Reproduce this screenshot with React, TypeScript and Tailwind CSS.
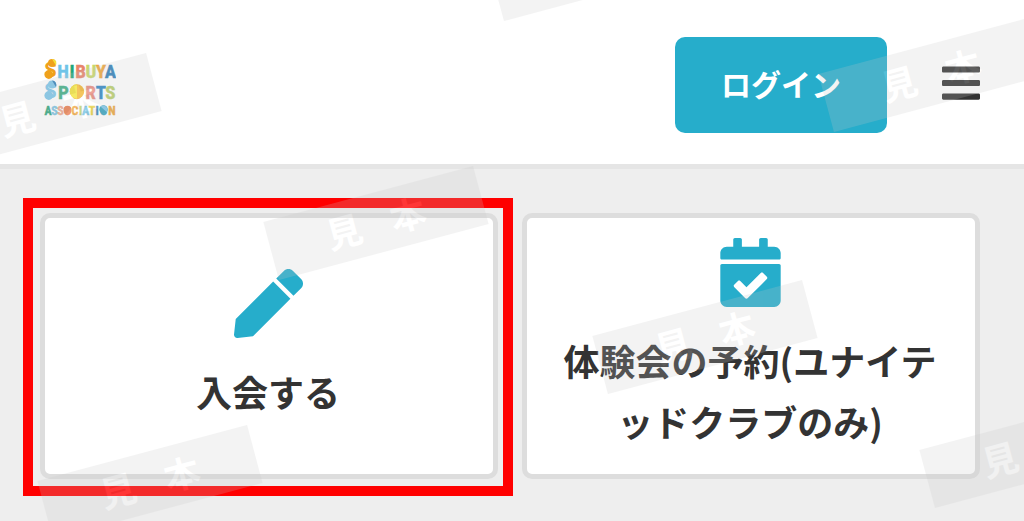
import React from 'react';
import { FaBars, FaCalendarCheck, FaPen } from 'react-icons/fa';

interface LogoLetter {
  char: string;
  x: number;
  color: string;
}

interface LogoRow {
  y: number;
  size: number;
  letters: LogoLetter[];
}

const logoRows: LogoRow[] = [
  {
    y: 19.5,
    size: 19,
    letters: [
      { char: 'H', x: 19, color: '#6fc4e8' },
      { char: 'I', x: 28, color: '#1fa67a' },
      { char: 'B', x: 36.5, color: '#e8846a' },
      { char: 'U', x: 47, color: '#c9d86a' },
      { char: 'Y', x: 57, color: '#efa63a' },
      { char: 'A', x: 66.5, color: '#2f7fb8' },
    ],
  },
  {
    y: 40.5,
    size: 19,
    letters: [
      { char: 'P', x: 19.5, color: '#3fae85' },
      { char: 'O', x: 33, color: '#f2b632' },
      { char: 'R', x: 46.5, color: '#e98a7c' },
      { char: 'T', x: 57, color: '#2f86c4' },
      { char: 'S', x: 66.5, color: '#b9cf6a' },
    ],
  },
  {
    y: 56.5,
    size: 12,
    letters: [
      { char: 'A', x: 4, color: '#2da57c' },
      { char: 'S', x: 10.5, color: '#7cc3e2' },
      { char: 'S', x: 16.5, color: '#efa98f' },
      { char: 'O', x: 23.5, color: '#ea7d4f' },
      { char: 'C', x: 31, color: '#f0a63c' },
      { char: 'I', x: 36.5, color: '#b9cf6a' },
      { char: 'A', x: 41.5, color: '#73c1e2' },
      { char: 'T', x: 48, color: '#e6cf3e' },
      { char: 'I', x: 53, color: '#2f7fb8' },
      { char: 'O', x: 59.5, color: '#35a3bd' },
      { char: 'N', x: 68, color: '#eba53a' },
    ],
  },
];

const Logo: React.FC = () => (
  <svg width="72" height="58" viewBox="0 0 72 58" role="img" aria-label="Shibuya Sports Association">
    {/* big swirly initials */}
    <g
      fontFamily='Roboto, "Liberation Sans", sans-serif'
      fontWeight="700"
      fontSize="20"
      textAnchor="middle"
    >
      <text x="6.5" y="19" fill="#efa11c">
        S
      </text>
      <text x="6.5" y="40" fill="#7cc6ea">
        S
      </text>
    </g>
    <circle cx="4.8" cy="16.5" r="4.4" fill="#efa11c" />
    <circle cx="8" cy="5" r="4" fill="#efa11c" />
    <path d="M8 1 A4.5 4.5 0 0 1 12 7.5 Z" fill="#f4e03a" />
    <circle cx="4.8" cy="37.5" r="4.4" fill="#7cc6ea" />
    <circle cx="8" cy="26.5" r="4" fill="#7cc6ea" />
    <path d="M8 22.5 A4.5 4.5 0 0 1 12 29 Z" fill="#2f7fb8" />
    {/* filled rounds behind the Os */}
    <circle cx="33" cy="33.5" r="7.2" fill="#f2b632" />
    <circle cx="23.5" cy="52" r="4" fill="#ea7d4f" />
    <circle cx="59.5" cy="51.5" r="4.2" fill="#35a3bd" />
    {logoRows.map((row) => (
      <g
        key={row.y}
        fontFamily='"Roboto Condensed", Roboto, "Liberation Sans", sans-serif'
        fontWeight="700"
        fontSize={row.size}
        textAnchor="middle"
        strokeWidth="0.4"
      >
        {row.letters.map((letter) => (
          <text key={letter.x} x={letter.x} y={row.y} fill={letter.color} stroke={letter.color}>
            {letter.char}
          </text>
        ))}
      </g>
    ))}
    <path d="M33 26.3 A7.2 7.2 0 0 0 33 40.7 Z" fill="#f3e43a" />
    <path d="M56.5 48.5 A4.2 4.2 0 0 1 62.7 54 Z" fill="#7cc6ea" />
  </svg>
);

// centre point of every stamp
const stamps = [
  { x: 601, y: -36 },
  { x: 49, y: 110 },
  { x: 931, y: 75 },
  { x: 376, y: 223 },
  { x: 705, y: 337 },
  { x: 150, y: 482 },
  { x: 1032, y: 451 },
];

const Watermark: React.FC = () => (
  <div className="pointer-events-none absolute inset-0 overflow-hidden">
    {stamps.map((stamp) => (
      <div
        key={`${stamp.x}-${stamp.y}`}
        className="absolute flex h-15 w-[217px] -translate-x-1/2 -translate-y-1/2 -rotate-15 items-center justify-center gap-[30px] bg-[#c8c8c8] pb-1 text-4xl font-bold text-white opacity-[0.21]"
        style={{ left: stamp.x, top: stamp.y }}
      >
        <span>見</span>
        <span>本</span>
      </div>
    ))}
  </div>
);

interface MenuCardProps {
  icon: React.ReactNode;
  label: string;
  highlighted?: boolean;
}

const MenuCard: React.FC<MenuCardProps> = ({ icon, label, highlighted = false }) => (
  <div className="relative flex">
    <a
      href="#"
      className="flex flex-1 flex-col items-center justify-center gap-[23px] rounded-[10px] border-5 border-[#dddddd] bg-white pt-5 pr-[26px] pb-[22px] pl-6"
    >
      <span className="text-[69px] text-[#26adcb]">{icon}</span>
      <span className="text-center text-4xl/[61px] font-bold break-all text-[#333333]">{label}</span>
    </a>
    {highlighted && (
      <div className="pointer-events-none absolute -top-[15px] -right-[15px] -bottom-[17px] -left-[17px] border-10 border-[#ff0000]" />
    )}
  </div>
);

export default function App() {
  return (
    <div
      lang="ja"
      className="relative min-h-screen overflow-hidden bg-[#eeeeee] font-['Noto_Sans_CJK_JP',sans-serif]"
    >
      <header className="flex items-center justify-between border-b-5 border-[#e5e5e5] bg-white px-11 pt-[37px] pb-[31px]">
        <a href="#" className="pt-1">
          <Logo />
        </a>
        <div className="flex items-center gap-[55px]">
          <button
            type="button"
            className="h-24 rounded-[10px] bg-[#26adcb] px-[46px] pb-1 text-3xl font-bold text-white"
          >
            ログイン
          </button>
          <button type="button" aria-label="メニュー" className="pb-1 text-[44px] text-[#333333]">
            <FaBars className="w-[38px]" />
          </button>
        </div>
      </header>

      <main className="grid grid-cols-2 gap-6 pt-11 pr-11 pb-10 pl-10">
        <MenuCard icon={<FaPen />} label="入会する" highlighted />
        <MenuCard icon={<FaCalendarCheck />} label="体験会の予約(ユナイテッドクラブのみ)" />
      </main>

      <Watermark />
    </div>
  );
}
